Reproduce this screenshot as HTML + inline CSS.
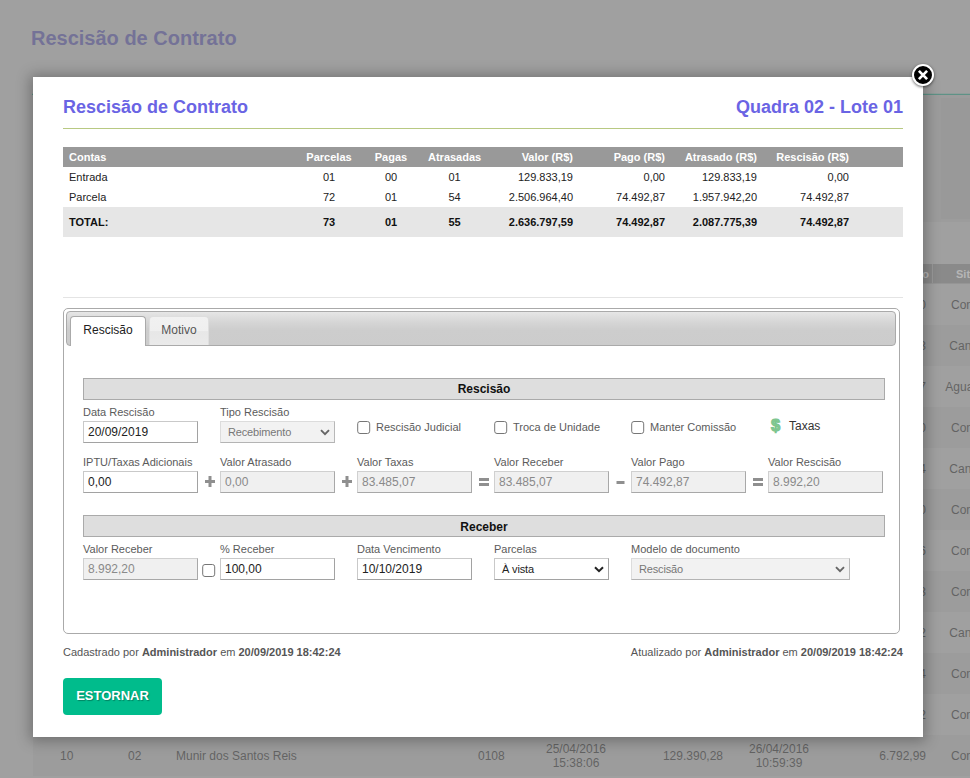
<!DOCTYPE html>
<html lang="pt-BR">
<head>
<meta charset="utf-8">
<title>Rescisão de Contrato</title>
<style>
*{box-sizing:border-box;margin:0;padding:0}
html,body{width:970px;height:778px;overflow:hidden;background:#fff}
body{font-family:"Liberation Sans",Arial,Helvetica,sans-serif;font-size:11px;color:#555;position:relative}
.a{position:absolute;white-space:nowrap}

/* ---------- background page ---------- */
#page{position:absolute;left:0;top:0;width:970px;height:778px;background:#fff;overflow:hidden}
#page h1{position:absolute;left:31px;top:26px;font-size:20px;line-height:24px;font-weight:bold;color:#6b66e0}
#page .tl{position:absolute;left:32px;top:94px;width:938px;height:1px;background:#22cfa9;box-shadow:0 -1px 0 rgba(34,207,169,.25)}
#page .filt{position:absolute;left:33px;top:95px;width:937px;height:127px;background:#f0f0f0}
#page .filt i{position:absolute;left:908px;top:3px;width:60px;height:121px;background:#e6e6e6}
#page .th{position:absolute;left:33px;top:264px;width:937px;height:20px;background:#b4b4b4;border-bottom:1px solid #dadada}
#page .th i{position:absolute;top:0;width:1px;height:19px;background:#e6e6e6}
#page .th span{position:absolute;top:0;line-height:20px;font-size:11px;font-weight:bold;color:#fff}
#page .r{position:absolute;left:33px;width:937px;height:41px;font-size:12px;color:#333}
#page .r.o{background:#f2f2f2}
#page .r span{position:absolute;white-space:nowrap;line-height:14px}
#overlay{position:absolute;left:0;top:0;width:970px;height:778px;background:#777;opacity:.7}

/* ---------- modal ---------- */
#modal{position:absolute;left:33px;top:77px;width:890px;height:660px;background:#fff;box-shadow:0 1px 13px 3px rgba(0,0,0,.29)}
#close{position:absolute;left:912px;top:64px;width:22px;height:22px;border-radius:50%;background:#000;border:2px solid #fff;box-shadow:0 1px 3px rgba(0,0,0,.6)}
#close svg{position:absolute;left:0;top:0}

/* modal content (coordinates relative to modal: subtract 33,77) */
#modal .ttl{position:absolute;top:20px;font-size:18px;line-height:20px;font-weight:bold;color:#6a64e4;white-space:nowrap}
#modal .gl{position:absolute;left:30px;top:51px;width:840px;height:1px;background:#b8c982}
table.sum{position:absolute;left:30px;top:70px;width:840px;border-collapse:collapse;table-layout:fixed;font-size:11px;color:#222}
table.sum th{background:#999;color:#fff;font-weight:bold;height:20px;line-height:20px;padding:0 6px;text-align:center;vertical-align:top}
table.sum td{height:20px;line-height:20px;padding:0 6px;text-align:center;vertical-align:top}
table.sum .l{text-align:left}
table.sum th:last-child{border-right:1px solid #fff}
table.sum .rr{text-align:right}
table.sum tr.tot td{height:30px;line-height:30px;background:#e6e6e6;font-weight:bold;color:#111}
#modal .hr{position:absolute;left:30px;top:220px;width:840px;height:1px;background:#e4e4e4}

/* tabs widget */
#tabs{position:absolute;left:30px;top:231px;width:837px;height:326px;border:1px solid #aaa;border-radius:5px;background:#fff}
#nav{position:absolute;left:33px;top:234px;width:830px;height:35px;border:1px solid #aaa;border-radius:4px;background:linear-gradient(#e6e6e6 0%,#d6d6d6 30%,#cdcdcd 55%,#ccc 100%)}
.tab{position:absolute;top:239px;font-size:12px;line-height:14px;text-align:center;border:1px solid #d3d3d3;border-bottom:0;border-radius:4px 4px 0 0;padding-top:6px}
.tab.on{left:37px;width:76px;height:30px;background:#fff;border-color:#aaa;color:#212121}
.tab.off{left:116px;width:60px;height:29px;border-color:#dedede;background:linear-gradient(#f1f1f1 0%,#efefef 50%,#e7e7e7 52%,#eaeaea 100%);color:#555}
.bar{position:absolute;left:50px;width:802px;height:22px;border:1px solid #aaa;background:#dedede;font-size:12px;font-weight:bold;color:#111;text-align:center;line-height:20px}
.lb{position:absolute;white-space:nowrap;font-size:11px;line-height:14px;color:#5b5b5b}
.in{position:absolute;width:115px;height:22px;border:1px solid;border-color:#c9c9c9 #a2a2a2 #a2a2a2 #c9c9c9;background:#fff;font-size:12px;line-height:20px;color:#222;padding-left:4px;white-space:nowrap;overflow:hidden}
.in.dis{background:#f0f0f0;border-color:#d0d0d0 #a8a8a8 #a8a8a8 #d0d0d0;color:#8a8a8a}
.sel{position:absolute;height:22px;border:1px solid;border-color:#c9c9c9 #a2a2a2 #a2a2a2 #c9c9c9;background:#fff;font-size:11px;line-height:20px;color:#222;padding-left:7px;white-space:nowrap;overflow:hidden;letter-spacing:-.15px}
.sel.dis{background:#f2f2f2;border-color:#dcdcdc #b8b8b8 #b4b4b4 #dcdcdc;color:#777}
.sel svg{position:absolute;right:4px;top:7px}
.cb{position:absolute;width:13px;height:13px;border:1px solid #767676;border-radius:2.5px;background:#fff}
.op{position:absolute}
#modal .foot{position:absolute;top:568px;font-size:11px;line-height:14px;color:#555;white-space:nowrap}
#modal .foot b{color:#555}
#btn{position:absolute;left:30px;top:601px;width:99px;height:37px;border-radius:4px;background:#00bc8c;color:#fff;font-size:13px;font-weight:bold;line-height:35px;text-align:center;text-shadow:1px 1px 1px rgba(0,0,0,.3)}
</style>
</head>
<body>
<div id="page">
  <h1>Rescisão de Contrato</h1>
  <div class="tl"></div>
  <div class="filt"><i></i></div>
  <div class="th"><i style="left:899px"></i></div>
  <div class="r" style="top:284px"><span style="left:773px;width:120px;text-align:right;top:14px">5.120,00</span><span style="left:900px;width:90px;text-align:center;top:14px">Concluído</span></div>
  <div class="r o" style="top:325px"><span style="left:773px;width:120px;text-align:right;top:14px">4.318,33</span><span style="left:900px;width:90px;text-align:center;top:14px">Cancelado</span></div>
  <div class="r" style="top:366px"><span style="left:773px;width:120px;text-align:right;top:14px">2.950,17</span><span style="left:900px;width:90px;text-align:center;top:14px">Aguardando</span></div>
  <div class="r o" style="top:407px"><span style="left:773px;width:120px;text-align:right;top:14px">3.600,00</span><span style="left:900px;width:90px;text-align:center;top:14px">Concluído</span></div>
  <div class="r" style="top:448px"><span style="left:773px;width:120px;text-align:right;top:14px">1.284,44</span><span style="left:900px;width:90px;text-align:center;top:14px">Cancelado</span></div>
  <div class="r o" style="top:489px"><span style="left:773px;width:120px;text-align:right;top:14px">7.410,00</span><span style="left:900px;width:90px;text-align:center;top:14px">Concluído</span></div>
  <div class="r" style="top:530px"><span style="left:773px;width:120px;text-align:right;top:14px">2.233,56</span><span style="left:900px;width:90px;text-align:center;top:14px">Concluído</span></div>
  <div class="r o" style="top:571px"><span style="left:773px;width:120px;text-align:right;top:14px">9.014,83</span><span style="left:900px;width:90px;text-align:center;top:14px">Concluído</span></div>
  <div class="r" style="top:612px"><span style="left:773px;width:120px;text-align:right;top:14px">6.127,32</span><span style="left:900px;width:90px;text-align:center;top:14px">Cancelado</span></div>
  <div class="r o" style="top:653px"><span style="left:773px;width:120px;text-align:right;top:14px">3.388,14</span><span style="left:900px;width:90px;text-align:center;top:14px">Concluído</span></div>
  <div class="r" style="top:694px"><span style="left:773px;width:120px;text-align:right;top:14px">5.906,42</span><span style="left:900px;width:90px;text-align:center;top:14px">Concluído</span></div>
  <div class="r o" style="top:735px"><span style="left:27px;top:14px">10</span><span style="left:95px;top:14px">02</span><span style="left:143px;top:14px">Munir dos Santos Reis</span><span style="left:445px;top:14px">0108</span><span style="left:483px;width:120px;text-align:center;top:7px">25/04/2016</span><span style="left:483px;width:120px;text-align:center;top:21px">15:38:06</span><span style="left:560px;width:130px;text-align:right;top:14px">129.390,28</span><span style="left:686px;width:120px;text-align:center;top:7px">26/04/2016</span><span style="left:686px;width:120px;text-align:center;top:21px">10:59:39</span><span style="left:773px;width:120px;text-align:right;top:14px">6.792,99</span><span style="left:900px;width:90px;text-align:center;top:14px">Concluído</span></div>
  <div class="r" style="top:776px"><span style="left:773px;width:120px;text-align:right;top:14px">4.100,00</span><span style="left:900px;width:90px;text-align:center;top:14px">Concluído</span></div>
</div>
<div id="overlay"></div>
<div class="a" style="left:899px;top:264px;line-height:20px;font-size:11px;font-weight:bold;color:#b6b6b6">Saldo</div><div class="a" style="left:956px;top:264px;line-height:20px;font-size:11px;font-weight:bold;color:#b6b6b6">Situação</div>
<div id="modal">
  <div class="ttl" style="left:30px">Rescisão de Contrato</div>
  <div class="ttl" style="right:20px">Quadra 02 - Lote 01</div>
  <div class="gl"></div>
  <table class="sum">
    <colgroup><col style="width:235px"><col style="width:62px"><col style="width:62px"><col style="width:65px"><col style="width:92px"><col style="width:92px"><col style="width:92px"><col style="width:92px"><col style="width:48px"></colgroup>
    <tr><th class="l">Contas</th><th>Parcelas</th><th>Pagas</th><th>Atrasadas</th><th class="rr">Valor (R$)</th><th class="rr">Pago (R$)</th><th class="rr">Atrasado (R$)</th><th class="rr">Rescisão (R$)</th><th></th></tr>
    <tr><td class="l">Entrada</td><td>01</td><td>00</td><td>01</td><td class="rr">129.833,19</td><td class="rr">0,00</td><td class="rr">129.833,19</td><td class="rr">0,00</td><td></td></tr>
    <tr><td class="l">Parcela</td><td>72</td><td>01</td><td>54</td><td class="rr">2.506.964,40</td><td class="rr">74.492,87</td><td class="rr">1.957.942,20</td><td class="rr">74.492,87</td><td></td></tr>
    <tr class="tot"><td class="l">TOTAL:</td><td>73</td><td>01</td><td>55</td><td class="rr">2.636.797,59</td><td class="rr">74.492,87</td><td class="rr">2.087.775,39</td><td class="rr">74.492,87</td><td></td></tr>
  </table>
  <div class="hr"></div>
  <div id="tabs"></div>
  <div id="nav"></div>
  <div class="tab on">Rescisão</div>
  <div class="tab off">Motivo</div>

  <div class="bar" style="top:301px">Rescisão</div>
  <div class="lb" style="left:50px;top:328px">Data Rescisão</div>
  <div class="in" style="left:50px;top:344px">20/09/2019</div>
  <div class="lb" style="left:187px;top:328px">Tipo Rescisão</div>
  <div class="sel dis" style="left:187px;top:344px;width:115px">Recebimento<svg width="10" height="7" viewBox="0 0 10 7"><path d="M1 1.2 L5 5.2 L9 1.2" stroke="#666" stroke-width="1.9" fill="none"/></svg></div>
  <svg class="op" style="left:324px;top:344px" width="14" height="13"><rect x="0.7" y="0.5" width="12" height="12" rx="2.3" fill="#fff" stroke="#767676"/></svg><div class="lb" style="left:343px;top:343px">Rescisão Judicial</div>
  <svg class="op" style="left:461px;top:344px" width="14" height="13"><rect x="0.7" y="0.5" width="12" height="12" rx="2.3" fill="#fff" stroke="#767676"/></svg><div class="lb" style="left:480px;top:343px">Troca de Unidade</div>
  <svg class="op" style="left:598px;top:344px" width="14" height="13"><rect x="0.7" y="0.5" width="12" height="12" rx="2.3" fill="#fff" stroke="#767676"/></svg><div class="lb" style="left:617px;top:343px">Manter Comissão</div>
  <div class="a" style="left:738px;top:337px;font-size:16.5px;line-height:22px;font-weight:bold;color:#84c994;-webkit-text-stroke:1.1px #7cc58e">$</div>
  <div class="a" style="left:756px;top:342px;font-size:12px;line-height:14px;color:#333">Taxas</div>

  <div class="lb" style="left:50px;top:378px">IPTU/Taxas Adicionais</div>
  <div class="in" style="left:50px;top:394px">0,00</div>
<svg class="op" style="left:172px;top:399px" width="10" height="11"><path d="M3.5 0h3v4H10v3H6.5v4h-3V7H0V4h3.5z" fill="#8f8f8f"/></svg>
  <div class="lb" style="left:187px;top:378px">Valor Atrasado</div>
  <div class="in dis" style="left:187px;top:394px">0,00</div>
<svg class="op" style="left:309px;top:399px" width="10" height="11"><path d="M3.5 0h3v4H10v3H6.5v4h-3V7H0V4h3.5z" fill="#8f8f8f"/></svg>
  <div class="lb" style="left:324px;top:378px">Valor Taxas</div>
  <div class="in dis" style="left:324px;top:394px">83.485,07</div>
<svg class="op" style="left:446px;top:399px" width="10" height="11"><path d="M0 2h10v3H0zM0 7h10v3H0z" fill="#8f8f8f"/></svg>
  <div class="lb" style="left:461px;top:378px">Valor Receber</div>
  <div class="in dis" style="left:461px;top:394px">83.485,07</div>
<svg class="op" style="left:583px;top:399px" width="10" height="11"><path d="M0.5 5h8v3h-8z" fill="#8f8f8f"/></svg>
  <div class="lb" style="left:598px;top:378px">Valor Pago</div>
  <div class="in dis" style="left:598px;top:394px">74.492,87</div>
<svg class="op" style="left:720px;top:399px" width="10" height="11"><path d="M0 2h10v3H0zM0 7h10v3H0z" fill="#8f8f8f"/></svg>
  <div class="lb" style="left:735px;top:378px">Valor Rescisão</div>
  <div class="in dis" style="left:735px;top:394px">8.992,20</div>

  <div class="bar" style="top:438px;line-height:22px">Receber</div>
  <div class="lb" style="left:50px;top:465px">Valor Receber</div>
  <div class="in dis" style="left:50px;top:481px">8.992,20</div>
  <svg class="op" style="left:169px;top:487px" width="14" height="13"><rect x="0.7" y="0.5" width="12" height="12" rx="2.3" fill="#fff" stroke="#767676"/></svg>
  <div class="lb" style="left:187px;top:465px">% Receber</div>
  <div class="in" style="left:187px;top:481px">100,00</div>
  <div class="lb" style="left:324px;top:465px">Data Vencimento</div>
  <div class="in" style="left:324px;top:481px">10/10/2019</div>
  <div class="lb" style="left:461px;top:465px">Parcelas</div>
  <div class="sel" style="left:461px;top:481px;width:115px">À vista<svg width="10" height="7" viewBox="0 0 10 7"><path d="M1 1.2 L5 5.2 L9 1.2" stroke="#222" stroke-width="2" fill="none"/></svg></div>
  <div class="lb" style="left:598px;top:465px">Modelo de documento</div>
  <div class="sel dis" style="left:598px;top:481px;width:219px">Rescisão<svg width="10" height="7" viewBox="0 0 10 7"><path d="M1 1.2 L5 5.2 L9 1.2" stroke="#666" stroke-width="1.9" fill="none"/></svg></div>

  <div class="foot" style="left:30px">Cadastrado por <b>Administrador</b> em <b>20/09/2019 18:42:24</b></div>
  <div class="foot" style="right:20px">Atualizado por <b>Administrador</b> em <b>20/09/2019 18:42:24</b></div>
  <div id="btn">ESTORNAR</div>
</div>
<div id="close"><svg width="18" height="18" viewBox="0 0 18 18"><path d="M4.9 4.9 L13.1 13.1 M13.1 4.9 L4.9 13.1" stroke="#fff" stroke-width="2.7" stroke-linecap="butt" fill="none"/></svg></div>
</body>
</html>
